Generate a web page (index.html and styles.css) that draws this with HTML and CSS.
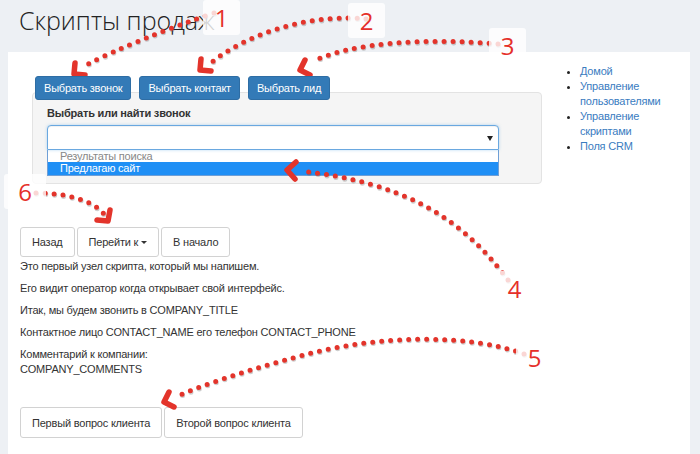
FILE: index.html
```html
<!DOCTYPE html>
<html lang="ru">
<head>
<meta charset="utf-8">
<title>Скрипты продаж</title>
<link rel="stylesheet" href="styles.css">
</head>
<body>
<div class="page">
  <h1 class="title">Скрипты продаж</h1>
  <div class="panel">
    <div class="top">
      <div class="chooser">
        <div class="tabs">
          <button class="btn btn-primary">Выбрать звонок</button>
          <button class="btn btn-primary">Выбрать контакт</button>
          <button class="btn btn-primary">Выбрать лид</button>
        </div>
        <div class="well">
          <div class="field-label">Выбрать или найти звонок</div>
          <div class="select-box"><span class="select-arrow"></span></div>
          <div class="results">
            <div class="group">Результаты поиска</div>
            <div class="option active">Предлагаю сайт</div>
          </div>
        </div>
      </div>
      <ul class="side">
        <li><a href="#">Домой</a></li>
        <li><a href="#">Управление пользователями</a></li>
        <li><a href="#">Управление скриптами</a></li>
        <li><a href="#">Поля CRM</a></li>
      </ul>
    </div>
    <div class="nav">
      <button class="btn btn-default">Назад</button>
      <button class="btn btn-default">Перейти к&nbsp;<span class="caret"></span></button>
      <button class="btn btn-default">В начало</button>
    </div>
    <div class="text">
      <p>Это первый узел скрипта, который мы напишем.</p>
      <p>Его видит оператор когда открывает свой интерфейс.</p>
      <p>Итак, мы будем звонить в COMPANY_TITLE</p>
      <p>Контактное лицо CONTACT_NAME его телефон CONTACT_PHONE</p>
      <p>Комментарий к компании:<br>COMPANY_COMMENTS</p>
    </div>
    <div class="answers">
      <button class="btn btn-answer">Первый вопрос клиента</button>
      <button class="btn btn-answer">Второй вопрос клиента</button>
    </div>
  </div>

  <svg class="annot" width="700" height="454" viewBox="0 0 700 454">
    <g class="shadow" transform="translate(0.6 1.3)">
      <path d="M 214 13 Q 135 40 84 66"/>
      <path d="M 366 19 C 320 14, 255 28, 212 62"/>
      <path d="M 498 44 C 430 38, 350 42, 312 62"/>
      <path d="M 508 280 C 460 215, 400 182, 300 171"/>
      <path d="M 524 354 C 470 334, 380 334, 300 356 S 200 387, 175 397"/>
      <path d="M 36 193 C 66 193, 92 200, 104 214"/>
    </g>
    <g class="dots">
      <path d="M 214 13 Q 135 40 84 66"/>
      <path d="M 366 19 C 320 14, 255 28, 212 62"/>
      <path d="M 498 44 C 430 38, 350 42, 312 62"/>
      <path d="M 508 280 C 460 215, 400 182, 300 171"/>
      <path d="M 524 354 C 470 334, 380 334, 300 356 S 200 387, 175 397"/>
      <path d="M 36 193 C 66 193, 92 200, 104 214"/>
    </g>
    <g class="heads">
      <path d="M 75 63 L 74 74 L 85 75"/>
      <path d="M 201 59 L 200 70 L 211 71"/>
      <path d="M 305 60 L 300 70 L 310 75"/>
      <path d="M 296 162 L 287 170 L 295 179"/>
      <path d="M 169 392 L 164 402 L 174 407"/>
      <path d="M 110 210 L 108 221 L 97 220"/>
    </g>
  </svg>

  <div class="tag t1">1</div>
  <div class="tag t2">2</div>
  <div class="tag t3">3</div>
  <div class="tag t4">4</div>
  <div class="tag t5">5</div>
  <div class="tag t6">6</div>
</div>
</body>
</html>
```

FILE: styles.css
```css
* { box-sizing: border-box; }

body {
  margin: 0;
  background: #edf0f4;
  font-family: "Liberation Sans", Arial, sans-serif;
  font-size: 11px;
  letter-spacing: -0.2px;
  color: #333;
}

.page {
  position: relative;
  width: 700px;
  height: 454px;
  overflow: hidden;
}

.title {
  margin: 0;
  height: 52px;
  padding-left: 19px;
  font-family: "Open Sans", "Liberation Sans", sans-serif;
  font-weight: 300;
  font-size: 25px;
  letter-spacing: 0;
  line-height: 40px;
  color: #222;
}

.panel {
  margin-left: 8px;
  width: 682px;
  height: 402px;
  background: #fff;
  padding-left: 12px;
}

.top {
  display: flex;
  padding-top: 12px;
}

.chooser {
  margin-left: 12px;
  width: 510px;
  padding-top: 12px;
}

.tabs {
  position: relative;
  z-index: 1;
  display: flex;
  gap: 8px;
  padding-left: 3px;
  height: 24px;
}

.btn {
  font-family: "Liberation Sans", Arial, sans-serif;
  font-size: 11px;
  letter-spacing: -0.2px;
  border-radius: 3px;
  cursor: pointer;
  display: inline-flex;
  align-items: center;
  justify-content: center;
  margin: 0;
}

.btn-primary {
  height: 24px;
  padding: 0 8px;
  background: #337ab7;
  border: 1px solid #2e6da4;
  color: #fff;
}

.well {
  margin-top: -8px;
  height: 92px;
  background: #f5f5f5;
  border: 1px solid #e3e3e3;
  border-radius: 4px;
  padding: 13px 0 0 14px;
}

.field-label {
  font-weight: bold;
  line-height: 14px;
  height: 14px;
  margin-bottom: 5px;
  color: #333;
}

.select-box {
  position: relative;
  width: 452px;
  height: 25px;
  background: #fff;
  border: 1px solid #6aa8e0;
  border-radius: 4px 4px 0 0;
  box-shadow: inset 0 1px 1px rgba(0,0,0,0.06), 0 0 3px rgba(102,175,233,0.5);
}

.select-arrow {
  position: absolute;
  right: 5px;
  top: 10px;
  width: 0;
  height: 0;
  border-left: 3px solid transparent;
  border-right: 3px solid transparent;
  border-top: 5px solid #222;
}

.results {
  width: 452px;
  background: #fff;
  border: 1px solid #6f9fd6;
  border-top: none;
}

.group {
  height: 12px;
  line-height: 12px;
  padding-left: 12px;
  color: #888;
}

.option {
  height: 13px;
  line-height: 13px;
  padding-left: 12px;
}

.option.active {
  background: #1f8ff5;
  color: #fff;
}

.side {
  margin: 0 0 0 13px;
  padding: 0 0 0 25px;
  line-height: 15px;
  width: 125px;
  color: #222;
}

.side a {
  color: #3a7cbf;
  text-decoration: none;
}

.nav {
  display: flex;
  gap: 2px;
  margin-top: 43px;
}

.btn-default {
  height: 30px;
  padding: 0 11px;
  background: #fff;
  border: 1px solid #d2d2d2;
  color: #333;
}

.caret {
  display: inline-block;
  width: 0;
  height: 0;
  border-left: 3px solid transparent;
  border-right: 3px solid transparent;
  border-top: 3px solid #333;
}

.text {
  padding-top: 2px;
}

.text p {
  margin: 0 0 7px;
  line-height: 15px;
}

.answers {
  display: flex;
  gap: 2px;
  margin-top: 30px;
}

.btn-answer {
  height: 31px;
  padding: 0 11px;
  background: #fff;
  border: 1px solid #d2d2d2;
  color: #333;
}

.annot {
  position: absolute;
  left: 0;
  top: 0;
  pointer-events: none;
}

.annot path {
  fill: none;
  stroke-linecap: round;
  stroke-linejoin: round;
}

.annot .shadow path {
  stroke: rgba(80, 80, 80, 0.28);
  stroke-width: 5;
  stroke-dasharray: 0 9;
}

.annot .dots path {
  stroke: #e3342b;
  stroke-width: 5;
  stroke-dasharray: 0 9;
}

.annot .heads path {
  stroke: #e3342b;
  stroke-width: 5.5;
}

.tag {
  position: absolute;
  display: flex;
  align-items: center;
  justify-content: center;
  width: 37px;
  height: 35px;
  background: rgba(255, 255, 255, 0.8);
  border-radius: 3px;
  font-family: "Open Sans", "Liberation Sans", sans-serif;
  font-weight: 400;
  font-size: 24px;
  letter-spacing: 0;
  color: #e5302a;
}

.t1 { left: 203px; top: 0; }
.t2 { left: 348px; top: 3px; }
.t3 { left: 489px; top: 28px; }
.t4 { left: 496px; top: 271px; }
.t5 { left: 516px; top: 340px; }
.t6 { left: 4px; top: 174px; width: 42px; }
```
